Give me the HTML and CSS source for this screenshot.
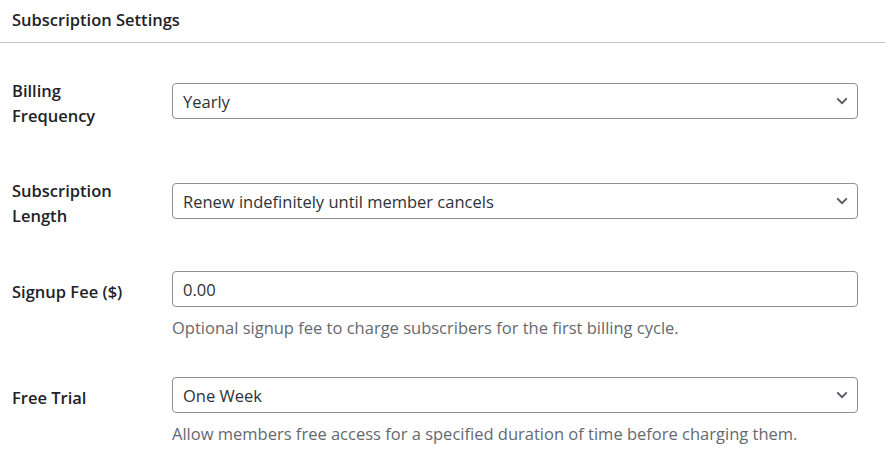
FILE: index.html
```html
<!DOCTYPE html>
<html lang="en">
<head>
<meta charset="utf-8">
<title>Subscription Settings</title>
<link rel="stylesheet" href="styles.css">
</head>
<body>
<div class="panel">
  <div class="panel-header">Subscription Settings</div>
  <div class="form">
    <div class="row row-1">
      <label class="label" for="billing">Billing Frequency</label>
      <div class="control">
        <select id="billing" class="field"><option>Yearly</option></select>
        <svg class="chev" width="12" height="8" viewBox="0 0 12 8"><path d="M1.2 1.4 6 6.2 10.8 1.4" fill="none" stroke="#50575e" stroke-width="1.8"/></svg>
      </div>
    </div>
    <div class="row row-2">
      <label class="label" for="length">Subscription Length</label>
      <div class="control">
        <select id="length" class="field"><option>Renew indefinitely until member cancels</option></select>
        <svg class="chev" width="12" height="8" viewBox="0 0 12 8"><path d="M1.2 1.4 6 6.2 10.8 1.4" fill="none" stroke="#50575e" stroke-width="1.8"/></svg>
      </div>
    </div>
    <div class="row row-3">
      <label class="label" for="fee">Signup Fee ($)</label>
      <div class="control">
        <input id="fee" class="field" type="text" value="0.00">
      </div>
      <p class="help">Optional signup fee to charge subscribers for the first billing cycle.</p>
    </div>
    <div class="row row-4">
      <label class="label" for="trial">Free Trial</label>
      <div class="control">
        <select id="trial" class="field"><option>One Week</option></select>
        <svg class="chev" width="12" height="8" viewBox="0 0 12 8"><path d="M1.2 1.4 6 6.2 10.8 1.4" fill="none" stroke="#50575e" stroke-width="1.8"/></svg>
      </div>
      <p class="help">Allow members free access for a specified duration of time before charging them.</p>
    </div>
  </div>
</div>
</body>
</html>
```
FILE: styles.css
```css
html, body {
  margin: 0;
  padding: 0;
  background: #ffffff;
}
body {
  font-family: "Open Sans", "Noto Sans", "Liberation Sans", sans-serif;
  font-size: 16.5px;
  color: #1d2327;
}
.panel-header {
  padding: 8px 12px 10px;
  line-height: 24px;
  font-weight: 600;
  border-bottom: 1px solid #c3c4c7;
}
.form {
  padding: 31px 0 0 12px;
}
.row {
  display: grid;
  grid-template-columns: 160px 686px;
  align-items: center;
}
.row-1 { margin-bottom: 46px; }
.row-2 { margin-bottom: 43px; }
.row-3 { margin-bottom: 37px; }
.label {
  grid-column: 1;
  grid-row: 1;
  max-width: 124px;
  padding-top: 4px;
  font-weight: 600;
  line-height: 25px;
}
.control {
  grid-column: 2;
  grid-row: 1;
  position: relative;
}
.field {
  display: block;
  box-sizing: border-box;
  width: 100%;
  height: 36px;
  margin: 0;
  padding: 0 30px 0 10px;
  border: 1px solid #8c8f94;
  border-radius: 4px;
  background: #ffffff;
  font: inherit;
  color: #2c3338;
  -webkit-appearance: none;
  appearance: none;
  outline: none;
}
.chev {
  position: absolute;
  right: 10px;
  top: 14px;
  pointer-events: none;
}
.help {
  grid-column: 2;
  grid-row: 2;
  margin: 9px 0 0;
  line-height: 24px;
  color: #646970;
}
```
